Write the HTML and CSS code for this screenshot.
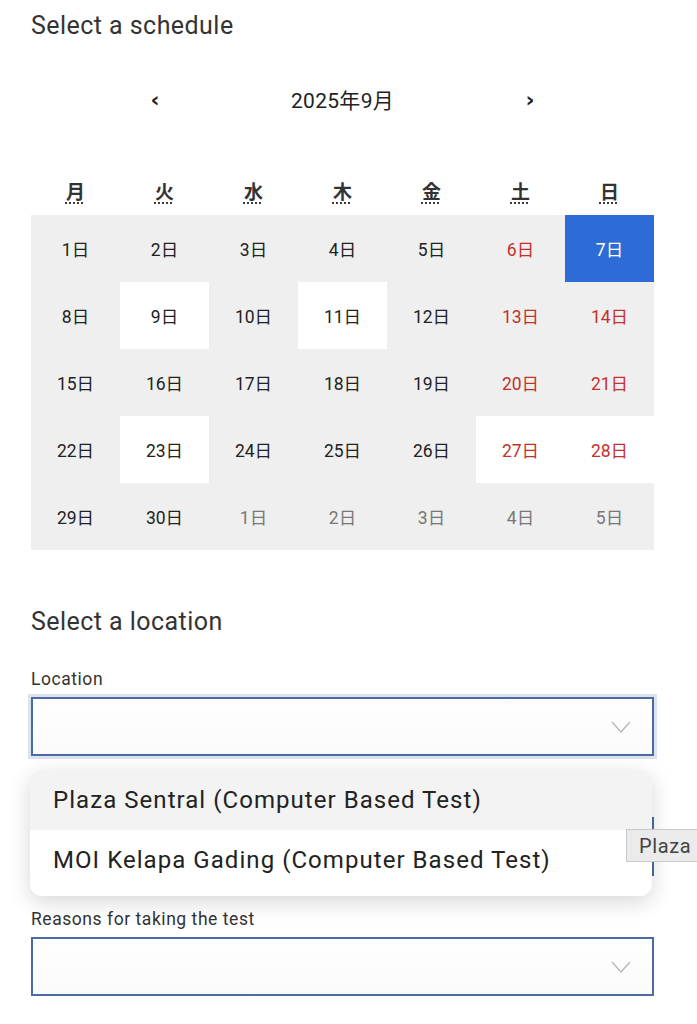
FILE: index.html
```html
<html lang="ja">
  <head>
    <meta charset="UTF-8" />
    <meta name="viewport" content="width=device-width, initial-scale=1.0" />
    <title>Select a schedule</title>
    <link rel="stylesheet" href="styles.css">
  </head>
  <body>
    <main class="page">
      <!-- Schedule -->
      <section class="schedule">
        <h2 class="section-title">Select a schedule</h2>

        <div class="cal-nav">
          <button class="nav-btn" type="button">&lsaquo;</button>
          <span class="cal-title">2025年9月</span>
          <button class="nav-btn" type="button">&rsaquo;</button>
        </div>

        <div class="cal-head">
          <abbr title="月曜日">月</abbr>
          <abbr title="火曜日">火</abbr>
          <abbr title="水曜日">水</abbr>
          <abbr title="木曜日">木</abbr>
          <abbr title="金曜日">金</abbr>
          <abbr title="土曜日">土</abbr>
          <abbr title="日曜日">日</abbr>
        </div>

        <div class="cal-grid">
          <div class="day">1日</div>
          <div class="day">2日</div>
          <div class="day">3日</div>
          <div class="day">4日</div>
          <div class="day">5日</div>
          <div class="day weekend">6日</div>
          <div class="day selected">7日</div>

          <div class="day">8日</div>
          <div class="day open">9日</div>
          <div class="day">10日</div>
          <div class="day open">11日</div>
          <div class="day">12日</div>
          <div class="day weekend">13日</div>
          <div class="day weekend">14日</div>

          <div class="day">15日</div>
          <div class="day">16日</div>
          <div class="day">17日</div>
          <div class="day">18日</div>
          <div class="day">19日</div>
          <div class="day weekend">20日</div>
          <div class="day weekend">21日</div>

          <div class="day">22日</div>
          <div class="day open">23日</div>
          <div class="day">24日</div>
          <div class="day">25日</div>
          <div class="day">26日</div>
          <div class="day weekend open">27日</div>
          <div class="day weekend open">28日</div>

          <div class="day">29日</div>
          <div class="day">30日</div>
          <div class="day other">1日</div>
          <div class="day other">2日</div>
          <div class="day other">3日</div>
          <div class="day other">4日</div>
          <div class="day other">5日</div>
        </div>
      </section>

      <!-- Location -->
      <section class="location">
        <h2 class="section-title">Select a location</h2>

        <div class="field">
          <label class="field-label">Location</label>
          <div class="select focused">
            <svg class="chevron" width="20" height="12" viewBox="0 0 20 12">
              <polyline points="1,1 10,11 19,1" fill="none" stroke="#bcbcbc" stroke-width="1.5" />
            </svg>
          </div>
        </div>

        <div class="field">
          <label class="field-label covered">Test type</label>
          <div class="select">
            <svg class="chevron" width="20" height="12" viewBox="0 0 20 12">
              <polyline points="1,1 10,11 19,1" fill="none" stroke="#bcbcbc" stroke-width="1.5" />
            </svg>
          </div>
        </div>

        <div class="field">
          <label class="field-label">Reasons for taking the test</label>
          <div class="select">
            <svg class="chevron" width="20" height="12" viewBox="0 0 20 12">
              <polyline points="1,1 10,11 19,1" fill="none" stroke="#bcbcbc" stroke-width="1.5" />
            </svg>
          </div>
        </div>

        <!-- open list for Location -->
        <ul class="dropdown">
          <li class="option active">Plaza Sentral (Computer Based Test)</li>
          <li class="option">MOI Kelapa Gading (Computer Based Test)</li>
        </ul>

        <div class="tooltip">Plaza Sentral (Computer Based Test)</div>
      </section>
    </main>
  </body>
</html>
```

FILE: styles.css
```css
html,
body {
  margin: 0;
  padding: 0;
  overflow: hidden;
  background: #fff;
}
body {
  font-family: Roboto, "Noto Sans CJK JP", sans-serif;
  color: #333;
}
.page {
  width: 623px;
  margin-left: 31px;
}
.section-title {
  font-size: 25px;
  line-height: 30px;
  font-weight: 400;
  letter-spacing: 0.45px;
  color: #333;
  margin: 0;
}
.schedule .section-title {
  margin-top: 11px;
}

/* Calendar */
.cal-nav {
  display: flex;
  justify-content: center;
  align-items: center;
  height: 38px;
  margin-top: 39px;
}
.nav-btn {
  width: 44px;
  height: 38px;
  background: none;
  border: none;
  font-family: "DejaVu Sans", sans-serif;
  font-size: 22px;
  font-weight: bold;
  color: #222;
  padding: 0;
}
.cal-title {
  width: 331px;
  text-align: center;
  font-size: 21px;
  letter-spacing: 0.3px;
  color: #222;
}
.cal-head {
  display: grid;
  grid-template-columns: repeat(7, 1fr);
  height: 38px;
  margin-top: 53px;
  margin-bottom: 6px;
  align-items: center;
  text-align: center;
}
.cal-head abbr {
  font-size: 19px;
  font-weight: bold;
  color: #333;
  text-decoration: underline dotted;
  text-underline-offset: 4px;
}
.cal-grid {
  display: grid;
  grid-template-columns: repeat(7, 1fr);
  grid-auto-rows: 67px;
  background-color: #efefef;
}
.day {
  display: flex;
  justify-content: center;
  align-items: center;
  font-size: 17.5px;
  color: #222;
}
.day.open {
  background-color: #fff;
}
.day.weekend {
  color: #c4302b;
}
.day.other {
  color: #777;
}
.day.selected {
  background-color: #2d6cd6;
  color: #fff;
}

/* Location form */
.location {
  position: relative;
  margin-top: 57px;
}
.field {
  margin-top: 32px;
}
.field + .field {
  margin-top: 33px;
}
.field-label {
  display: block;
  font-size: 17.5px;
  line-height: 20px;
  letter-spacing: 0.55px;
  color: #333;
  margin-bottom: 8px;
}
.field-label.covered {
  visibility: hidden;
}
.select {
  height: 59px;
  box-sizing: border-box;
  border: 2px solid #4a6ba3;
  background: linear-gradient(#fff, #fafafa);
  display: flex;
  justify-content: flex-end;
  align-items: center;
  padding-right: 21px;
}
.select.focused {
  box-shadow: 0 0 0 3px #dde3ec;
}
.dropdown {
  position: absolute;
  top: 163px;
  left: -1px;
  width: 622px;
  margin: 0;
  padding: 0 0 6px;
  list-style: none;
  background: #fff;
  border-radius: 12px;
  overflow: hidden;
  box-shadow: 0 6px 22px rgba(0, 0, 0, 0.16);
}
.option {
  height: 60px;
  line-height: 60px;
  padding-left: 23px;
  font-size: 24px;
  letter-spacing: 1.05px;
  color: #222;
}
.option.active {
  background-color: #f3f3f3;
}
.tooltip {
  position: absolute;
  top: 222px;
  left: 595px;
  height: 33px;
  line-height: 33px;
  padding: 0 12px;
  font-size: 20px;
  letter-spacing: 0.6px;
  color: #444;
  white-space: nowrap;
  background: #ebebeb;
  border: 1px solid #c9c9c9;
  box-sizing: border-box;
}
```
